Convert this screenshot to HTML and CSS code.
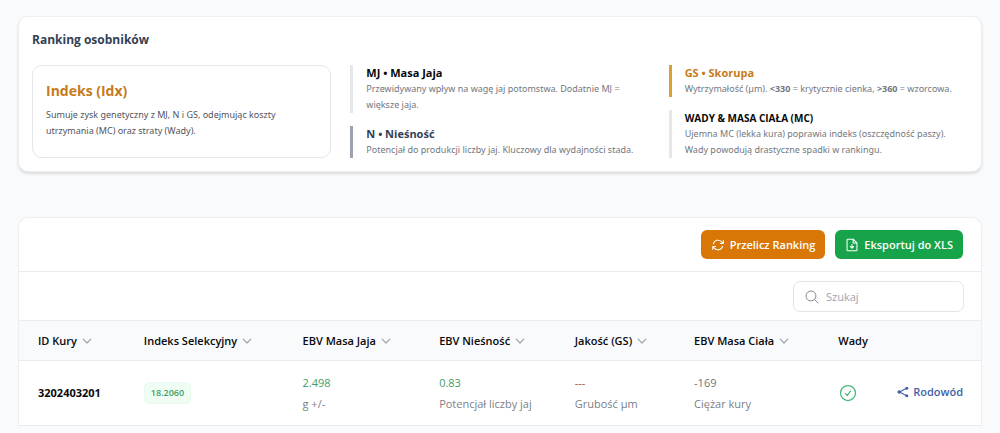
FILE: index.html
```html
<!DOCTYPE html>
<html lang="pl">
<head>
<meta charset="utf-8">
<meta name="viewport" content="width=device-width, initial-scale=1">
<title>Ranking osobników</title>
<link rel="stylesheet" href="styles.css">
</head>
<body>
<svg class="sprite" aria-hidden="true">
  <symbol id="chevron" viewBox="0 0 10 10"><path d="M1.2 3.2 5 7l3.800-3.800" fill="none" stroke="currentColor" stroke-width="1.200" stroke-linecap="round" stroke-linejoin="round"/></symbol>
</svg>
<main class="page">
  <section class="card summary">
    <h1 class="summary-title">Ranking osobników</h1>
    <div class="summary-grid">
      <div class="index-box">
        <h2 class="index-title">Indeks (Idx)</h2>
        <p class="index-text">Sumuje zysk genetyczny z MJ, N i GS, odejmując koszty utrzymania (MC) oraz straty (Wady).</p>
      </div>
      <div class="notes">
        <div class="note">
          <h3 class="note-title">MJ • Masa Jaja</h3>
          <p class="note-text">Przewidywany wpływ na wagę jaj potomstwa. Dodatnie MJ = większe jaja.</p>
        </div>
        <div class="note note-gray">
          <h3 class="note-title">N • Nieśność</h3>
          <p class="note-text">Potencjał do produkcji liczby jaj. Kluczowy dla wydajności stada.</p>
        </div>
      </div>
      <div class="notes">
        <div class="note note-amber">
          <h3 class="note-title">GS • Skorupa</h3>
          <p class="note-text">Wytrzymałość (µm). <b>&lt;330</b> = krytycznie cienka, <b>&gt;360</b> = wzorcowa.</p>
        </div>
        <div class="note">
          <h3 class="note-title note-caps">Wady &amp; Masa Ciała (MC)</h3>
          <p class="note-text">Ujemna MC (lekka kura) poprawia indeks (oszczędność paszy). Wady powodują drastyczne spadki w rankingu.</p>
        </div>
      </div>
    </div>
  </section>

  <section class="card listing">
    <div class="actions">
      <button type="button" class="btn btn-amber">
        <svg class="btn-icon" viewBox="0 0 24 24"><path d="M16.023 9.348h4.992v-.001M2.985 19.644v-4.992m0 0h4.992m-4.993 0 3.181 3.183a8.250 8.250 0 0 0 13.803-3.700M4.031 9.865a8.250 8.250 0 0 1 13.803-3.700l3.181 3.182m0-4.991v4.990"/></svg>
        Przelicz Ranking
      </button>
      <button type="button" class="btn btn-green">
        <svg class="btn-icon" viewBox="0 0 24 24"><path d="M14 2H5a1.500 1.500 0 0 0-1.500 1.500v17A1.500 1.500 0 0 0 5 22h14a1.500 1.500 0 0 0 1.500-1.500V8.500L14 2v6.500h6.500M12 11v6.500m-3-3 3 3 3-3"/></svg>
        Eksportuj do XLS
      </button>
    </div>
    <div class="filters">
      <label class="search">
        <svg class="search-icon" viewBox="0 0 24 24"><path d="m21 21-5.197-5.197m0 0A7.500 7.500 0 1 0 5.196 5.196a7.500 7.500 0 0 0 10.607 10.607Z"/></svg>
        <input class="search-input" type="search" placeholder="Szukaj" aria-label="Szukaj">
      </label>
    </div>
    <table class="ranking">
      <colgroup>
        <col class="c-id"><col class="c-index"><col class="c-mass"><col class="c-laying"><col class="c-shell"><col class="c-body"><col class="c-defects">
      </colgroup>
      <thead>
        <tr>
          <th><button type="button" class="sort">ID Kury <svg class="chevron"><use href="#chevron"/></svg></button></th>
          <th><button type="button" class="sort">Indeks Selekcyjny <svg class="chevron"><use href="#chevron"/></svg></button></th>
          <th><button type="button" class="sort">EBV Masa Jaja <svg class="chevron"><use href="#chevron"/></svg></button></th>
          <th><button type="button" class="sort">EBV Nieśność <svg class="chevron"><use href="#chevron"/></svg></button></th>
          <th><button type="button" class="sort">Jakość (GS) <svg class="chevron"><use href="#chevron"/></svg></button></th>
          <th><button type="button" class="sort">EBV Masa Ciała <svg class="chevron"><use href="#chevron"/></svg></button></th>
          <th colspan="2">Wady</th>
        </tr>
      </thead>
      <tbody>
        <tr>
          <td class="hen-id">3202403201</td>
          <td><span class="badge">18.2060</span></td>
          <td><div class="value good">2.498</div><div class="hint">g +/-</div></td>
          <td><div class="value good">0.83</div><div class="hint">Potencjał liczby jaj</div></td>
          <td><div class="value bad">---</div><div class="hint">Grubość µm</div></td>
          <td><div class="value">-169</div><div class="hint">Ciężar kury</div></td>
          <td><svg class="check" viewBox="0 0 24 24" role="img" aria-label="Brak wad"><path d="M9 12.750 11.250 15 15 9.750M21 12a9 9 0 1 1-18 0 9 9 0 0 1 18 0Z"/></svg></td>
          <td class="row-action"><a class="link" href="#"><svg class="share" viewBox="0 0 12 12"><path d="M9.500 2.200 2.500 6l7 3.800"/><circle cx="9.800" cy="2.200" r="1.500"/><circle cx="2.200" cy="6" r="1.700"/><circle cx="9.800" cy="9.800" r="1.500"/></svg>Rodowód</a></td>
        </tr>
      </tbody>
    </table>
  </section>
</main>
</body>
</html>
```
FILE: styles.css
```css
* { box-sizing: border-box; }
body {
  margin: 0;
  background: #f8fafc;
  color: #09090b;
  font-family: "Open Sans", "Noto Sans", sans-serif;
  font-size: 11px;
  line-height: 16px;
}
h1, h2, h3, p { margin: 0; }
button, input { font: inherit; color: inherit; }
.sprite { display: none; }
.page {
  display: flex;
  flex-direction: column;
  gap: 45px;
  padding: 16px 18px 0;
}
.card {
  background: #fff;
  border: 1px solid #eceef0;
  border-radius: 10px;
}
.summary {
  padding: 13px;
  box-shadow: 0 2px 3px rgba(0, 0, 0, .12);
}
.summary-title {
  margin-bottom: 15px;
  color: #334155;
  font-size: 12px;
  line-height: 20px;
  font-weight: 700;
}
.summary-grid {
  display: grid;
  grid-template-columns: repeat(3, 1fr);
  gap: 19px;
}
.index-box {
  padding: 14px 13px;
  border: 1px solid #e5e7eb;
  border-radius: 10px;
}
.index-title {
  margin-bottom: 5px;
  color: #c67a1c;
  font-size: 14px;
  line-height: 22px;
  font-weight: 700;
}
.index-text, .note-text {
  font-family: "Noto Sans", "Open Sans", sans-serif;
  font-size: 9px;
}
.index-text { color: #52525b; }
.note-text { color: #73777e; }
.notes { display: flex; flex-direction: column; gap: 13px; }
.note { padding-left: 13px; border-left: 3px solid #e5e7eb; }
.note-gray { border-color: #9ca3af; }
.note-gray .note-title { color: #334155; }
.note-amber { border-color: #d9a032; }
.note-amber .note-title { color: #c67a1c; }
.note-title { font-size: 11px; font-weight: 700; }
.note-caps { font-size: 10px; text-transform: uppercase; }

.listing { border-bottom: 0; border-radius: 10px 10px 0 0; }
.actions {
  display: flex;
  justify-content: flex-end;
  gap: 10px;
  padding: 12px 18px;
  border-bottom: 1px solid #e9ebee;
}
.btn {
  display: flex;
  align-items: center;
  gap: 5px;
  height: 29px;
  padding: 0 10px;
  border: 0;
  border-radius: 6px;
  color: #fff;
  font-weight: 600;
}
.btn-amber { background: #d97706; }
.btn-green { background: #16a34a; }
.btn-icon, .search-icon, .check {
  fill: none;
  stroke: currentColor;
  stroke-width: 1.5;
  stroke-linecap: round;
  stroke-linejoin: round;
}
.btn-icon { width: 14px; height: 14px; stroke-width: 1.8; }
.filters {
  display: flex;
  justify-content: flex-end;
  padding: 9px 17px 8px;
}
.search {
  display: flex;
  align-items: center;
  gap: 6px;
  width: 171px;
  height: 31px;
  padding: 0 10px;
  border: 1px solid #e2e4e8;
  border-radius: 7px;
}
.search-icon { flex: none; width: 16px; height: 16px; color: #858b95; }
.search-input {
  flex: 1;
  min-width: 0;
  padding: 0;
  border: 0;
  outline: 0;
  background: none;
}
.search-input::placeholder { color: #9ca3af; opacity: 1; }

.ranking { width: 100%; border-collapse: collapse; table-layout: fixed; }
.c-id { width: 11%; }
.c-index { width: 16.5%; }
.c-mass { width: 14.2%; }
.c-laying { width: 14.1%; }
.c-shell { width: 12.4%; }
.c-body { width: 15%; }
.c-defects { width: 5%; }
.ranking th {
  height: 40px;
  padding: 0 0 0 19px;
  border-top: 1px solid #e9ebee;
  background: #f8fafc;
  text-align: left;
  font-weight: 600;
}
.sort {
  display: flex;
  align-items: center;
  gap: 5px;
  padding: 0;
  border: 0;
  background: none;
  font-weight: 600;
  white-space: nowrap;
}
.chevron { width: 10px; height: 10px; color: #9ca3af; }
.ranking td {
  height: 65px;
  padding: 0 0 0 19px;
  border-top: 1px solid #e9ebee;
  border-bottom: 1px solid #e9ebee;
  white-space: nowrap;
}
.ranking .hen-id { font-weight: 700; }
.badge {
  display: inline-block;
  padding: 2px 6px;
  border: 1px solid #e9fbf0;
  border-radius: 5px;
  background: #f0fdf4;
  color: #3f9d68;
  font-size: 9px;
  font-weight: 600;
}
.value { margin-bottom: 5px; color: #71757c; }
.hint { color: #7b7f86; }
.good { color: #3f9d68; }
.bad { color: #a0523f; }
.check { display: block; width: 20px; height: 20px; color: #46b877; }
.ranking .row-action { padding: 0 18px 0 0; text-align: right; }
.link {
  display: inline-flex;
  align-items: center;
  gap: 4px;
  color: #405fa8;
  font-weight: 600;
  text-decoration: none;
}
.share {
  width: 12px;
  height: 12px;
  fill: currentColor;
}
.share path { fill: none; stroke: currentColor; stroke-width: 1.1; }
```
